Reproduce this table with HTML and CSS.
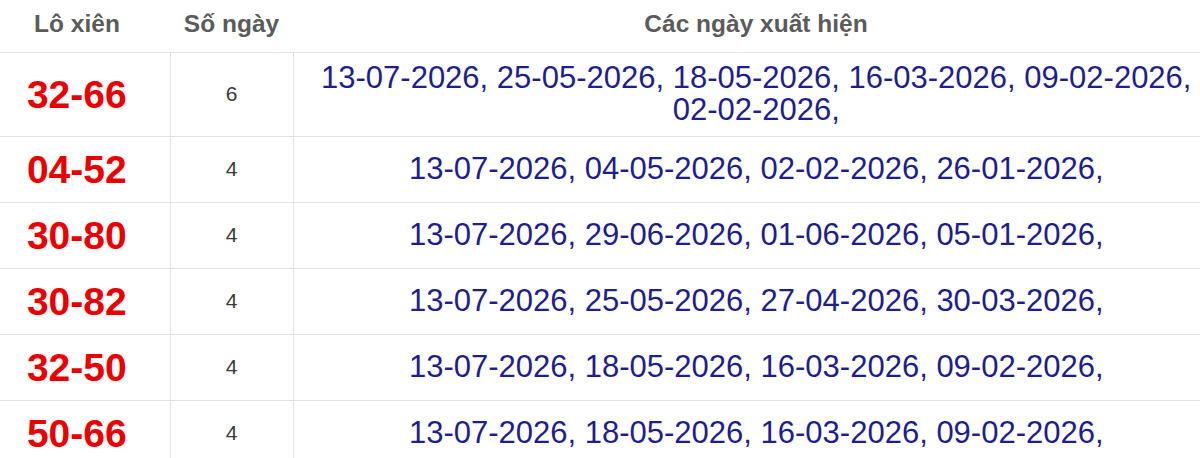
FILE: index.html
```html
<!DOCTYPE html>
<html lang="vi">
<head>
<meta charset="utf-8">
<title>Lô xiên</title>
<link rel="stylesheet" href="styles.css">
</head>
<body>
<table class="lx-table">
  <colgroup>
    <col class="c1"><col class="c2"><col class="c3">
  </colgroup>
  <thead>
    <tr><th>Lô xiên</th><th>Số ngày</th><th>Các ngày xuất hiện</th></tr>
  </thead>
  <tbody>
    <tr><td class="pair">32-66</td><td class="count">6</td><td class="dates"><span class="d">13-07-2026,</span> <span class="d">25-05-2026,</span> <span class="d">18-05-2026,</span> <span class="d">16-03-2026,</span> <span class="d">09-02-2026,</span> <span class="d">02-02-2026,</span></td></tr>
    <tr><td class="pair">04-52</td><td class="count">4</td><td class="dates"><span class="d">13-07-2026,</span> <span class="d">04-05-2026,</span> <span class="d">02-02-2026,</span> <span class="d">26-01-2026,</span></td></tr>
    <tr><td class="pair">30-80</td><td class="count">4</td><td class="dates"><span class="d">13-07-2026,</span> <span class="d">29-06-2026,</span> <span class="d">01-06-2026,</span> <span class="d">05-01-2026,</span></td></tr>
    <tr><td class="pair">30-82</td><td class="count">4</td><td class="dates"><span class="d">13-07-2026,</span> <span class="d">25-05-2026,</span> <span class="d">27-04-2026,</span> <span class="d">30-03-2026,</span></td></tr>
    <tr><td class="pair">32-50</td><td class="count">4</td><td class="dates"><span class="d">13-07-2026,</span> <span class="d">18-05-2026,</span> <span class="d">16-03-2026,</span> <span class="d">09-02-2026,</span></td></tr>
    <tr><td class="pair">50-66</td><td class="count">4</td><td class="dates"><span class="d">13-07-2026,</span> <span class="d">18-05-2026,</span> <span class="d">16-03-2026,</span> <span class="d">09-02-2026,</span></td></tr>
  </tbody>
</table>
</body>
</html>
```
FILE: styles.css
```css
html, body {
  margin: 0;
  padding: 0;
  background: #fff;
  overflow: hidden;
}
body {
  font-family: "Liberation Sans", Arial, sans-serif;
}
.lx-table {
  border-collapse: collapse;
  table-layout: fixed;
  width: 1235px;
  margin-left: -16px;
}
.c1 { width: 186px; }
.c2 { width: 123px; }
.c3 { width: 926px; }
.lx-table th {
  height: 52px;
  padding: 0 0 4px;
  font-size: 24.5px;
  font-weight: bold;
  color: #5b5b5b;
  text-align: center;
  vertical-align: middle;
  border-bottom: 1px solid #e3e3e3;
  box-sizing: border-box;
}
.lx-table td {
  padding: 9px 0;
  text-align: center;
  vertical-align: middle;
  border-top: 1px solid #e3e3e3;
  border-left: 1px solid #e3e3e3;
}
.lx-table td:first-child {
  border-left: none;
}
.pair {
  font-size: 39px;
  font-weight: bold;
  color: #e80000;
  line-height: 47px;
}
.count {
  font-size: 21px;
  color: #3a3a3a;
}
.dates {
  font-size: 31px;
  line-height: 32.5px;
  color: #1e1e8c;
}
.d {
  white-space: nowrap;
}
```
